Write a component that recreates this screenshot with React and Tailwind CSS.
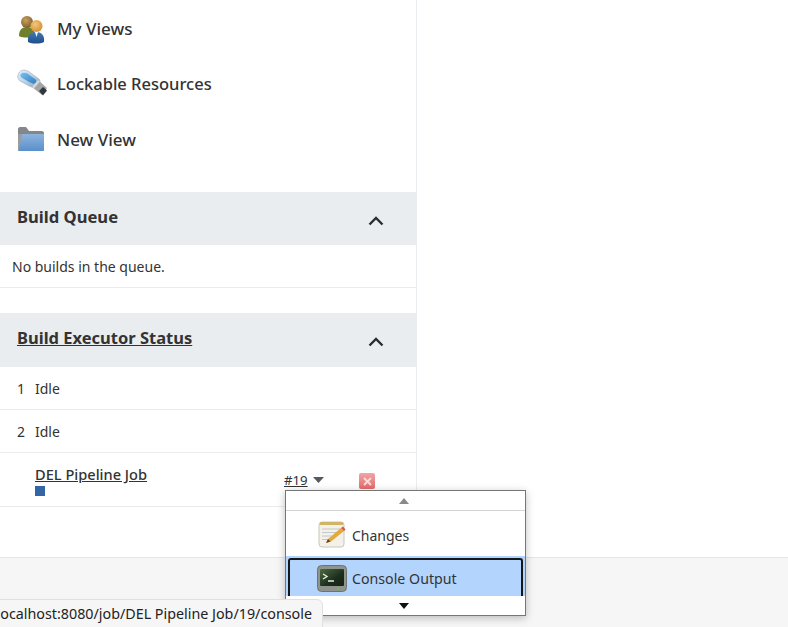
import React from 'react';

const UsersIcon = () => (
  <svg width="32" height="32" viewBox="0 0 32 32">
    <defs>
      <radialGradient id="head1" cx="0.4" cy="0.35" r="0.7"><stop offset="0" stopColor="#c9a060" /><stop offset="1" stopColor="#7d5a25" /></radialGradient>
      <radialGradient id="head2" cx="0.4" cy="0.35" r="0.7"><stop offset="0" stopColor="#f4c67e" /><stop offset="1" stopColor="#d48f30" /></radialGradient>
      <linearGradient id="body2" x1="0" y1="0" x2="0" y2="1"><stop offset="0" stopColor="#3f79b8" /><stop offset="1" stopColor="#1f4f88" /></linearGradient>
    </defs>
    <path d="M2 23c0-6 3-9 8-9s8 3 8 9c-3 2-13 2-16 0z" fill="#6f7f2b" />
    <circle cx="10" cy="9" r="6" fill="url(#head1)" />
    <path d="M11 29c-1-7 3-10 8-10s9 3 8 10c-4 2-12 2-16 0z" fill="url(#body2)" />
    <path d="M18 19h3l-1.500 5z" fill="#fff" />
    <circle cx="19.500" cy="13" r="6" fill="url(#head2)" />
  </svg>
);

const UsbIcon = () => (
  <svg width="32" height="32" viewBox="0 0 32 32">
    <defs>
      <linearGradient id="usb" x1="0" y1="0" x2="1" y2="1"><stop offset="0" stopColor="#e4f1fa" /><stop offset="0.5" stopColor="#bcd3e4" /><stop offset="1" stopColor="#8fa3b2" /></linearGradient>
      <linearGradient id="usbInner" x1="0" y1="0" x2="1" y2="1"><stop offset="0" stopColor="#7cc0ee" /><stop offset="1" stopColor="#2f7fc4" /></linearGradient>
    </defs>
    <path d="M1 7c1-5 6-6 10-4l11 8c2 2 1 6-2 8-3 1-6 0-8-1L3 13C1 11 0 9 1 7z" fill="url(#usb)" stroke="#9cb3c4" strokeWidth="0.6" />
    <path d="M3.500 6.500c1-2 4-2.500 7-1l8 6c1.500 1.500 1 3.500-.5 4-2 .5-4-.5-6-1.500L4.500 9.500c-1-.8-1.400-2-1-3z" fill="url(#usbInner)" />
    <path d="M15 19l6-7 9 8-5 7z" fill="#a2a6a9" />
    <path d="M22 23l4-4 4 3.500-4 5z" fill="#34373a" />
    <path d="M15 19l6-7 2 1.500-6 7z" fill="#d5d8da" />
  </svg>
);

const FolderIcon = () => (
  <svg width="28" height="26" viewBox="0 0 28 26">
    <defs>
      <linearGradient id="folder" x1="0" y1="0" x2="0" y2="1"><stop offset="0" stopColor="#8db4dd" /><stop offset="1" stopColor="#5b8fca" /></linearGradient>
    </defs>
    <path d="M1 2c0-1 1-2 2-2h6l3 4h13c1 0 2 1 2 2v3H1z" fill="#84878a" />
    <path d="M1 24V7h4v17z" fill="#9a9c9e" />
    <path d="M5 7h21c.6 0 1 .4 1 1v15c0 .6-.4 1-1 1H3c-.6 0-1-.4-1-1z" fill="url(#folder)" />
  </svg>
);

const NotepadIcon = () => (
  <svg width="28" height="28" viewBox="0 0 28 28">
    <rect x="1" y="2" width="25" height="25" rx="3" fill="#f3f1ea" stroke="#c8c6bd" />
    <rect x="2" y="2" width="23" height="3" fill="#cfb565" />
    <path d="M4 9h19M4 12.500h19M4 16h10M4 19.500h6" stroke="#c4c6c8" strokeWidth="1" />
    <path d="M8 23l2-4L23 8l3 3-13 10.500z" fill="#e2a93b" />
    <path d="M23 8l2-1.500 2.500 3L26 11z" fill="#d9534a" />
    <path d="M8 23l2-4 2.500 2.500z" fill="#5a4630" />
  </svg>
);

const TerminalIcon = () => (
  <svg width="30" height="27" viewBox="0 0 30 27">
    <defs>
      <linearGradient id="screen" x1="0" y1="0" x2="1" y2="1"><stop offset="0" stopColor="#4d6b3f" /><stop offset="0.6" stopColor="#1d2e1e" /><stop offset="1" stopColor="#152015" /></linearGradient>
    </defs>
    <rect x="0.500" y="0.500" width="29" height="26" rx="4" fill="#8f938d" stroke="#6f726d" />
    <rect x="3" y="4" width="24" height="17" rx="1" fill="url(#screen)" />
    <path d="M6 9l4 2.500-4 2.500M11 16h6" stroke="#e4ece0" strokeWidth="1.400" fill="none" />
    <rect x="20" y="23" width="2" height="1" fill="#6fc24a" />
  </svg>
);

const StopIcon = () => (
  <div className="w-4 h-4 rounded-[2px] bg-gradient-to-b from-[#f0a5a5] to-[#e26a6a] flex items-center justify-center">
    <svg width="9" height="9" viewBox="0 0 9 9"><path d="M1 1l7 7M8 1L1 8" stroke="#f8dcdc" strokeWidth="2" /></svg>
  </div>
);

const Chevron = () => (
  <svg width="16" height="10" viewBox="0 0 16 10" className="mt-1"><path d="M1.500 8.500L8 2l6.500 6.500" stroke="#2d2d2d" strokeWidth="2.400" fill="none" /></svg>
);

const tasks = [
  { label: 'My Views', icon: <UsersIcon />, size: 'text-[17px]' },
  { label: 'Lockable Resources', icon: <UsbIcon />, size: 'text-[16.5px]' },
  { label: 'New View', icon: <FolderIcon />, size: 'text-[17px]' },
];

export default function App() {
  return (
    <div className="relative h-[627px] w-[788px] overflow-hidden bg-white text-[#333] font-['Noto_Sans','Open_Sans',sans-serif]">
      <div className="w-[417px] h-[557px] border-r border-[#e9edf0]">
        {/* Tasks */}
        <div className="h-[192px] pt-[1px]">
          {tasks.map((t) => (
            <div key={t.label} className="h-[55.5px] flex items-center pl-[17px]">
              <div className="w-[32px] h-[32px] mr-[8px] flex items-center">{t.icon}</div>
              <span className={`${t.size} font-medium`}>{t.label}</span>
            </div>
          ))}
        </div>

        {/* Build Queue */}
        <div className="h-[53px] bg-[#e9edf0] flex items-center justify-between pl-[17px] pr-[32px]">
          <span className="text-[16.6px] font-bold pb-[3px]">Build Queue</span>
          <Chevron />
        </div>
        <div className="h-[43px] pl-[12px] flex items-center border-b border-[#e9edf0] text-[14px]">No builds in the queue.</div>

        {/* Build Executor Status */}
        <div className="mt-[25px] h-[54px] bg-[#e9edf0] flex items-center justify-between pl-[17px] pr-[32px]">
          <span className="text-[16.5px] font-bold underline pb-[3px]">Build Executor Status</span>
          <Chevron />
        </div>
        <div className="h-[43px] flex items-center border-b border-[#e9edf0] text-[14px]">
          <span className="w-[35px] pl-[17px]">1</span><span>Idle</span>
        </div>
        <div className="h-[43px] flex items-center border-b border-[#e9edf0] text-[14px]">
          <span className="w-[35px] pl-[17px]">2</span><span>Idle</span>
        </div>
        <div className="h-[54px] flex border-b border-[#e9edf0] text-[14px] pl-[35px]">
          <div className="w-[249px] pt-[11px]">
            <div className="underline leading-[20px] text-[14.6px] font-medium">DEL Pipeline Job</div>
            <div className="w-[10px] h-[10px] bg-[#3465a4] mt-[2px]" />
          </div>
          <div className="w-[75px] pt-[17px] flex items-start">
            <span className="underline leading-[20px] text-[13.2px]">#19</span>
            <svg width="11" height="6" viewBox="0 0 11 6" className="ml-[5px] mt-[7px]"><path d="M0 0h11L5.500 6z" fill="#555a60" /></svg>
          </div>
          <div className="pt-[20px]"><StopIcon /></div>
        </div>
      </div>

      {/* Footer */}
      <div className="h-[70px] bg-[#f6f6f6] border-t border-[#e6e6e6]" />

      {/* Dropdown menu */}
      <div className="absolute left-[285px] top-[490px] w-[241px] h-[126px] flex flex-col border border-[#767676] bg-white shadow-[0_2px_8px_rgba(0,0,0,0.25)] text-[14px]">
        <div className="h-[20px] pr-[3px] flex items-center justify-center border-b border-[#d4d4d4]">
          <svg width="10" height="6" viewBox="0 0 10 6"><path d="M0 6h10L5 0z" fill="#8a8a8a" /></svg>
        </div>
        <div className="h-[45px] flex items-center pl-[32px] gap-[6px]">
          <NotepadIcon />
          <span className="pt-[3px]">Changes</span>
        </div>
        <div className="h-[40px] bg-[#b3d4fc] px-[2px] pt-[2px]">
          <div className="h-[38px] border-2 border-b-0 border-[#14171a] rounded-t-[3px] flex items-center pl-[27px] gap-[5px]">
            <TerminalIcon />
            <span className="text-[14.2px] pt-[2px]">Console Output</span>
          </div>
        </div>
        <div className="flex-1 pr-[3px] flex items-center justify-center">
          <svg width="10" height="6" viewBox="0 0 10 6"><path d="M0 0h10L5 6z" fill="#111" /></svg>
        </div>
      </div>

      {/* Status bar tooltip */}
      <div className="absolute left-[-4px] top-[599px] h-[29px] w-[327px] bg-[#f6f6f6] border border-[#e0e0e0] rounded-tr-md flex items-center justify-end pr-[10px] text-[14.3px] text-[#222] whitespace-nowrap overflow-hidden">
        localhost:8080/job/DEL Pipeline Job/19/console
      </div>
    </div>
  );
}
